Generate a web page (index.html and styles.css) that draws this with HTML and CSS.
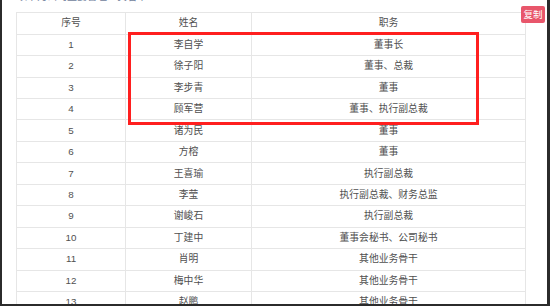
FILE: index.html
```
<!DOCTYPE html>
<html lang="zh-CN">
<head>
<meta charset="utf-8">
<title>管理人员</title>
<link rel="stylesheet" href="styles.css">
</head>
<body>
<div class="window">
  <div class="caption"><span>以下为公司主要管理人员名单：</span></div>
  <table class="grid">
    <colgroup><col class="c1"><col class="c2"><col class="c3"></colgroup>
    <thead>
      <tr><th>序号</th><th>姓名</th><th>职务</th></tr>
    </thead>
    <tbody>
      <tr><td>1</td><td>李自学</td><td>董事长</td></tr>
      <tr><td>2</td><td>徐子阳</td><td>董事、总裁</td></tr>
      <tr><td>3</td><td>李步青</td><td>董事</td></tr>
      <tr><td>4</td><td>顾军营</td><td>董事、执行副总裁</td></tr>
      <tr><td>5</td><td>诸为民</td><td>董事</td></tr>
      <tr><td>6</td><td>方榕</td><td>董事</td></tr>
      <tr><td>7</td><td>王喜瑜</td><td>执行副总裁</td></tr>
      <tr><td>8</td><td>李莹</td><td>执行副总裁、财务总监</td></tr>
      <tr><td>9</td><td>谢峻石</td><td>执行副总裁</td></tr>
      <tr><td>10</td><td>丁建中</td><td>董事会秘书、公司秘书</td></tr>
      <tr><td>11</td><td>肖明</td><td>其他业务骨干</td></tr>
      <tr><td>12</td><td>梅中华</td><td>其他业务骨干</td></tr>
      <tr><td>13</td><td>赵鹏</td><td>其他业务骨干</td></tr>
    </tbody>
  </table>
  <div class="highlight"></div>
  <button class="copy" type="button">复制</button>
</div>
</body>
</html>
```
FILE: styles.css
```
html, body {
  margin: 0;
  padding: 0;
  background: #fff;
}
.window {
  position: relative;
  height: 306px;
  box-sizing: border-box;
  border-left: 2px solid #2b2b2b;
  border-right: 3px solid #2b2b2b;
  border-bottom: 2px solid #2b2b2b;
  overflow: hidden;
  font-family: "Liberation Sans", "Noto Sans CJK SC", sans-serif;
  font-size: 9.8px;
  color: #505050;
}
.caption {
  height: 12px;
  overflow: hidden;
  padding-left: 15px;
}
.caption span {
  display: block;
  margin-top: -9px;
  line-height: 11px;
  font-size: 10px;
  color: #6f7d9b;
}
.grid {
  margin-left: 14px;
  width: 509px;
  border-collapse: collapse;
  table-layout: fixed;
}
.c1 { width: 109px; }
.c2 { width: 126px; }
.c3 { width: 274px; }
.grid th,
.grid td {
  border: 1px solid #e6e6e6;
  padding: 0;
  height: 20.45px;
  line-height: 12px;
  text-align: center;
  font-weight: normal;
  color: #505050;
}
.grid th {
  height: 20.7px;
}
.highlight {
  position: absolute;
  left: 126px;
  top: 32px;
  width: 345px;
  height: 87px;
  border: 3px solid #ff1f1f;
}
.copy {
  position: absolute;
  left: 519px;
  top: 6px;
  width: 24px;
  height: 17px;
  padding: 0;
  border: 0;
  border-radius: 2px;
  background: #e8566b;
  color: #fff;
  font-family: "Noto Sans CJK SC", sans-serif;
  font-size: 9.5px;
  line-height: 17px;
}
```
